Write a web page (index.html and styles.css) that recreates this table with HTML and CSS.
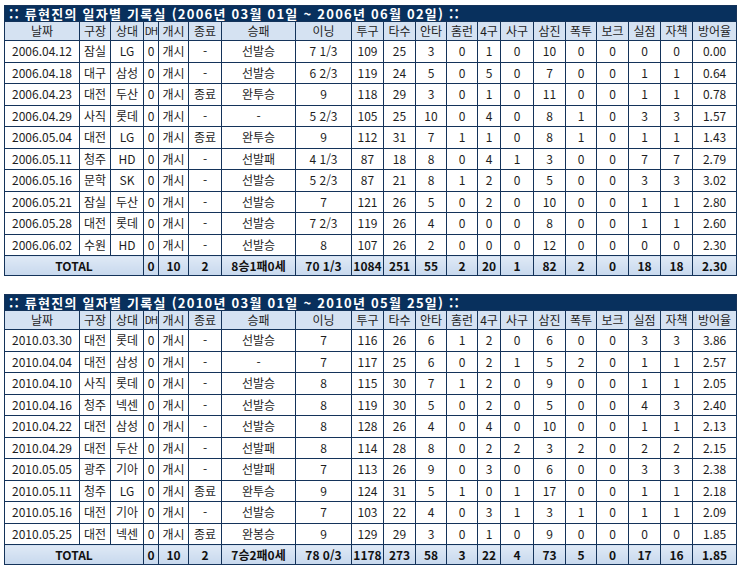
FILE: index.html
```html
<!DOCTYPE html>
<html lang="ko">
<head>
<meta charset="utf-8">
<title>류현진의 일자별 기록실</title>
<link rel="stylesheet" href="styles.css">
</head>
<body>
<div class="page">
<table class="rec">
<colgroup>
<col class="c-date"><col class="c31"><col class="c33"><col class="c-dh"><col class="c30"><col class="c33"><col class="c-wl"><col class="c-inn"><col class="c32"><col class="c32"><col class="c31"><col class="c31"><col class="c-bb"><col class="c33"><col class="c32"><col class="c31"><col class="c32"><col class="c32"><col class="c32"><col class="c-era">
</colgroup>
<tr class="title"><th colspan="20">:: 류현진의 일자별 기록실 (2006년 03월 01일 ~ 2006년 06월 02일) ::</th></tr>
<tr class="head"><th>날짜</th><th>구장</th><th>상대</th><th class="dh">DH</th><th>개시</th><th>종료</th><th>승패</th><th>이닝</th><th>투구</th><th>타수</th><th>안타</th><th>홈런</th><th>4구</th><th>사구</th><th>삼진</th><th>폭투</th><th>보크</th><th>실점</th><th>자책</th><th>방어율</th></tr>
<tr><td>2006.04.12</td><td>잠실</td><td>LG</td><td>0</td><td>개시</td><td>-</td><td>선발승</td><td>7 1/3</td><td>109</td><td>25</td><td>3</td><td>0</td><td>1</td><td>0</td><td>10</td><td>0</td><td>0</td><td>0</td><td>0</td><td>0.00</td></tr>
<tr><td>2006.04.18</td><td>대구</td><td>삼성</td><td>0</td><td>개시</td><td>-</td><td>선발승</td><td>6 2/3</td><td>119</td><td>24</td><td>5</td><td>0</td><td>5</td><td>0</td><td>7</td><td>0</td><td>0</td><td>1</td><td>1</td><td>0.64</td></tr>
<tr><td>2006.04.23</td><td>대전</td><td>두산</td><td>0</td><td>개시</td><td>종료</td><td>완투승</td><td>9</td><td>118</td><td>29</td><td>3</td><td>0</td><td>1</td><td>0</td><td>11</td><td>0</td><td>0</td><td>1</td><td>1</td><td>0.78</td></tr>
<tr><td>2006.04.29</td><td>사직</td><td>롯데</td><td>0</td><td>개시</td><td>-</td><td>-</td><td>5 2/3</td><td>105</td><td>25</td><td>10</td><td>0</td><td>4</td><td>0</td><td>8</td><td>1</td><td>0</td><td>3</td><td>3</td><td>1.57</td></tr>
<tr><td>2006.05.04</td><td>대전</td><td>LG</td><td>0</td><td>개시</td><td>종료</td><td>완투승</td><td>9</td><td>112</td><td>31</td><td>7</td><td>1</td><td>1</td><td>0</td><td>8</td><td>1</td><td>0</td><td>1</td><td>1</td><td>1.43</td></tr>
<tr><td>2006.05.11</td><td>청주</td><td>HD</td><td>0</td><td>개시</td><td>-</td><td>선발패</td><td>4 1/3</td><td>87</td><td>18</td><td>8</td><td>0</td><td>4</td><td>1</td><td>3</td><td>0</td><td>0</td><td>7</td><td>7</td><td>2.79</td></tr>
<tr><td>2006.05.16</td><td>문학</td><td>SK</td><td>0</td><td>개시</td><td>-</td><td>선발승</td><td>5 2/3</td><td>87</td><td>21</td><td>8</td><td>1</td><td>2</td><td>0</td><td>5</td><td>0</td><td>0</td><td>3</td><td>3</td><td>3.02</td></tr>
<tr><td>2006.05.21</td><td>잠실</td><td>두산</td><td>0</td><td>개시</td><td>-</td><td>선발승</td><td>7</td><td>121</td><td>26</td><td>5</td><td>0</td><td>2</td><td>0</td><td>10</td><td>0</td><td>0</td><td>1</td><td>1</td><td>2.80</td></tr>
<tr><td>2006.05.28</td><td>대전</td><td>롯데</td><td>0</td><td>개시</td><td>-</td><td>선발승</td><td>7 2/3</td><td>119</td><td>26</td><td>4</td><td>0</td><td>0</td><td>0</td><td>8</td><td>0</td><td>0</td><td>1</td><td>1</td><td>2.60</td></tr>
<tr><td>2006.06.02</td><td>수원</td><td>HD</td><td>0</td><td>개시</td><td>-</td><td>선발승</td><td>8</td><td>107</td><td>26</td><td>2</td><td>0</td><td>0</td><td>0</td><td>12</td><td>0</td><td>0</td><td>0</td><td>0</td><td>2.30</td></tr>
<tr class="total"><td colspan="3">TOTAL</td><td>0</td><td>10</td><td>2</td><td>8승1패0세</td><td>70 1/3</td><td>1084</td><td>251</td><td>55</td><td>2</td><td>20</td><td>1</td><td>82</td><td>2</td><td>0</td><td>18</td><td>18</td><td>2.30</td></tr>
</table>

<table class="rec">
<colgroup>
<col class="c-date"><col class="c31"><col class="c33"><col class="c-dh"><col class="c30"><col class="c33"><col class="c-wl"><col class="c-inn"><col class="c32"><col class="c32"><col class="c31"><col class="c31"><col class="c-bb"><col class="c33"><col class="c32"><col class="c31"><col class="c32"><col class="c32"><col class="c32"><col class="c-era">
</colgroup>
<tr class="title"><th colspan="20">:: 류현진의 일자별 기록실 (2010년 03월 01일 ~ 2010년 05월 25일) ::</th></tr>
<tr class="head"><th>날짜</th><th>구장</th><th>상대</th><th class="dh">DH</th><th>개시</th><th>종료</th><th>승패</th><th>이닝</th><th>투구</th><th>타수</th><th>안타</th><th>홈런</th><th>4구</th><th>사구</th><th>삼진</th><th>폭투</th><th>보크</th><th>실점</th><th>자책</th><th>방어율</th></tr>
<tr><td>2010.03.30</td><td>대전</td><td>롯데</td><td>0</td><td>개시</td><td>-</td><td>선발승</td><td>7</td><td>116</td><td>26</td><td>6</td><td>1</td><td>2</td><td>0</td><td>6</td><td>0</td><td>0</td><td>3</td><td>3</td><td>3.86</td></tr>
<tr><td>2010.04.04</td><td>대전</td><td>삼성</td><td>0</td><td>개시</td><td>-</td><td>-</td><td>7</td><td>117</td><td>25</td><td>6</td><td>0</td><td>2</td><td>1</td><td>5</td><td>2</td><td>0</td><td>1</td><td>1</td><td>2.57</td></tr>
<tr><td>2010.04.10</td><td>사직</td><td>롯데</td><td>0</td><td>개시</td><td>-</td><td>선발승</td><td>8</td><td>115</td><td>30</td><td>7</td><td>1</td><td>2</td><td>0</td><td>9</td><td>0</td><td>0</td><td>1</td><td>1</td><td>2.05</td></tr>
<tr><td>2010.04.16</td><td>청주</td><td>넥센</td><td>0</td><td>개시</td><td>-</td><td>선발승</td><td>8</td><td>119</td><td>30</td><td>5</td><td>0</td><td>2</td><td>0</td><td>5</td><td>0</td><td>0</td><td>4</td><td>3</td><td>2.40</td></tr>
<tr><td>2010.04.22</td><td>대전</td><td>삼성</td><td>0</td><td>개시</td><td>-</td><td>선발승</td><td>8</td><td>128</td><td>26</td><td>4</td><td>0</td><td>4</td><td>0</td><td>10</td><td>0</td><td>0</td><td>1</td><td>1</td><td>2.13</td></tr>
<tr><td>2010.04.29</td><td>대전</td><td>두산</td><td>0</td><td>개시</td><td>-</td><td>선발패</td><td>8</td><td>114</td><td>28</td><td>8</td><td>0</td><td>2</td><td>2</td><td>3</td><td>2</td><td>0</td><td>2</td><td>2</td><td>2.15</td></tr>
<tr><td>2010.05.05</td><td>광주</td><td>기아</td><td>0</td><td>개시</td><td>-</td><td>선발패</td><td>7</td><td>113</td><td>26</td><td>9</td><td>0</td><td>3</td><td>0</td><td>6</td><td>0</td><td>0</td><td>3</td><td>3</td><td>2.38</td></tr>
<tr><td>2010.05.11</td><td>청주</td><td>LG</td><td>0</td><td>개시</td><td>종료</td><td>완투승</td><td>9</td><td>124</td><td>31</td><td>5</td><td>1</td><td>0</td><td>1</td><td>17</td><td>0</td><td>0</td><td>1</td><td>1</td><td>2.18</td></tr>
<tr><td>2010.05.16</td><td>대전</td><td>기아</td><td>0</td><td>개시</td><td>-</td><td>선발승</td><td>7</td><td>103</td><td>22</td><td>4</td><td>0</td><td>3</td><td>1</td><td>3</td><td>1</td><td>0</td><td>1</td><td>1</td><td>2.09</td></tr>
<tr><td>2010.05.25</td><td>대전</td><td>넥센</td><td>0</td><td>개시</td><td>종료</td><td>완봉승</td><td>9</td><td>129</td><td>29</td><td>3</td><td>0</td><td>1</td><td>0</td><td>9</td><td>0</td><td>0</td><td>0</td><td>0</td><td>1.85</td></tr>
<tr class="total"><td colspan="3">TOTAL</td><td>0</td><td>10</td><td>2</td><td>7승2패0세</td><td>78 0/3</td><td>1178</td><td>273</td><td>58</td><td>3</td><td>22</td><td>4</td><td>73</td><td>5</td><td>0</td><td>17</td><td>16</td><td>1.85</td></tr>
</table>
</div>
</body>
</html>
```
FILE: styles.css
```css
html, body {
  margin: 0;
  padding: 0;
  background: #ffffff;
}
.page {
  padding: 5px 0 0 4px;
  display: flex;
  flex-direction: column;
  gap: 18px;
  font-family: "Noto Sans CJK KR", "DejaVu Sans", sans-serif;
}
.rec {
  border-collapse: collapse;
  table-layout: fixed;
  width: 732px;
  font-size: 12px;
  color: #1e1e1e;
}
.c-date { width: 75px; }
.c31 { width: 31px; }
.c33 { width: 33px; }
.c-dh { width: 15px; }
.c30 { width: 30px; }
.c-wl { width: 74px; }
.c-inn { width: 56px; }
.c32 { width: 32px; }
.c-bb { width: 23px; }
.c-era { width: 44px; }
.rec th, .rec td {
  border: 1px solid #14335a;
  padding: 0;
  text-align: center;
  white-space: nowrap;
  overflow: hidden;
  line-height: 14px;
}
.rec .title th {
  background: #08305d;
  color: #ffffff;
  font-weight: bold;
  font-size: 13px;
  letter-spacing: 1.25px;
  text-align: left;
  padding-left: 4px;
  height: 15px;
  line-height: 15px;
}
.rec .head th {
  background: #d5e2f2;
  font-weight: normal;
  height: 18px;
}
.rec .head th.dh {
  font-size: 10px;
  letter-spacing: -0.8px;
}
.rec tr td {
  height: 20.5px;
  background: #ffffff;
}
.rec .total td {
  height: 19px;
  font-weight: bold;
  color: #111111;
  background: linear-gradient(to bottom, #dfe9f6 0%, #c7d8ed 100%);
}
```
